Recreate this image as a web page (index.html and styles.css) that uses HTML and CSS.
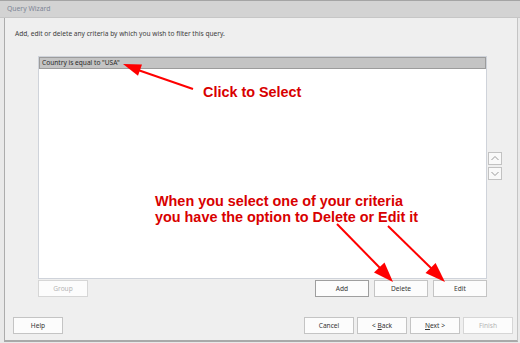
FILE: index.html
```html
<!DOCTYPE html>
<html>
<head>
<meta charset="utf-8">
<link rel="stylesheet" href="styles.css">
</head>
<body>
<div class="page">
  <div class="titlebar">Query Wizard</div>
  <div class="frame">
    <div class="desc">Add, edit or delete any criteria by which you wish to filter this query.</div>
    <div class="listrow">
      <div class="listbox">
        <div class="item selected">Country is equal to "USA"</div>
      </div>
      <div class="spin">
        <div class="spinbtn"><svg width="12" height="11" viewBox="0 0 12 11"><path d="M2.5 7 L6 3.5 L9.5 7" fill="none" stroke="#9a9a9a" stroke-width="1"/></svg></div>
        <div class="spinbtn"><svg width="12" height="11" viewBox="0 0 12 11"><path d="M2.5 4 L6 7.5 L9.5 4" fill="none" stroke="#9a9a9a" stroke-width="1"/></svg></div>
      </div>
    </div>
    <div class="row1">
      <div class="btn disabled w50">Group</div>
      <div class="right1">
        <div class="btn strong">Add</div>
        <div class="btn">Delete</div>
        <div class="btn">Edit</div>
      </div>
    </div>
    <div class="row2">
      <div class="btn w50">Help</div>
      <div class="right2">
        <div class="btn">Cancel</div>
        <div class="btn">&lt; <u>B</u>ack</div>
        <div class="btn"><u>N</u>ext &gt;</div>
        <div class="btn disabled">Finish</div>
      </div>
    </div>
  </div>

  <div class="note note1">Click to Select</div>
  <div class="note note2">When you select one of your criteria<br>you have the option to Delete or Edit it</div>
  <svg class="arrows" width="520" height="343" viewBox="0 0 520 343">
    <g stroke="#f00" stroke-width="2" fill="none">
      <line x1="193" y1="88" x2="138" y2="69"/>
      <line x1="337" y1="223" x2="381" y2="268"/>
      <line x1="388" y1="225" x2="432" y2="268"/>
    </g>
    <g fill="#f00">
      <polygon points="123,63 142,63.4 138,74.7"/>
      <polygon points="393,281 374,271.5 384.5,261.5"/>
      <polygon points="445,281 425.5,272 435.6,262"/>
    </g>
  </svg>
</div>
</body>
</html>
```

FILE: styles.css
```css
* { box-sizing: border-box; }
html, body { margin: 0; padding: 0; }
body {
  width: 520px;
  height: 343px;
  overflow: hidden;
  background: #e9e9e9;
  font-family: "Noto Sans", "Open Sans", sans-serif;
  font-size: 6.6px;
  color: #3a3a3a;
}
.page {
  position: relative;
  width: 520px;
  height: 343px;
  border-top: 1px solid #a4a4a4;
}
.titlebar {
  height: 17px;
  line-height: 16px;
  background: #d3d3d3;
  border-bottom: 1px solid #c6c6c6;
  padding-left: 7px;
  color: #7d8595;
  font-size: 6.8px;
}
.frame {
  margin-left: 4px;
  margin-right: 2px;
  height: 324px;
  background: #efefef;
  border-left: 1px solid #acacac;
  border-right: 1px solid #c4c4c4;
  border-bottom: 2px solid #a9a9a9;
  display: flex;
  flex-direction: column;
}
.desc {
  margin-top: 10px;
  padding-left: 10px;
  line-height: 12px;
  height: 12px;
  color: #3c3c3c;
}
.listrow {
  margin-top: 16px;
  margin-left: 33px;
  display: flex;
  align-items: center;
}
.listbox {
  width: 449px;
  height: 223px;
  background: #fff;
  border: 1px solid #cfd3da;
}
.item {
  height: 12px;
  line-height: 10px;
  padding-left: 2px;
  color: #2a2a2a;
}
.selected {
  background: #c4c4c4;
  border: 1px solid #9c9c9c;
}
.spin {
  margin-left: 1px;
  margin-top: -3px;
  display: flex;
  flex-direction: column;
  gap: 2px;
}
.spinbtn {
  width: 14px;
  height: 13px;
  background: #f9f9f9;
  border: 1px solid #c2c2c2;
  display: flex;
  align-items: center;
  justify-content: center;
}
.btn {
  width: 50px;
  height: 17px;
  background: #fcfcfc;
  border: 1px solid #c4c4c4;
  text-align: center;
  line-height: 15px;
  color: #353535;
}
.btn u { text-decoration: underline; }
.btn.disabled {
  color: #b4b4b4;
  border-color: #d6d6d6;
}
.btn.strong { border-color: #9e9e9e; }
.row1 {
  margin-top: 1px;
  margin-left: 33px;
  width: 449px;
  display: flex;
  justify-content: space-between;
}
.right1 {
  display: flex;
  gap: 5px;
}
.right1 .btn { width: 54px; }
.row2 {
  margin-top: 20px;
  margin-left: 8px;
  margin-right: 4px;
  display: flex;
  justify-content: space-between;
}
.right2 {
  display: flex;
  gap: 3px;
}
.note {
  position: absolute;
  font-family: "Liberation Sans", Arial, sans-serif;
  font-weight: bold;
  font-size: 14.4px;
  line-height: 16px;
  color: #d80000;
  white-space: nowrap;
}
.note1 { left: 203px; top: 83px; }
.note2 { left: 155px; top: 192px; }
.arrows {
  position: absolute;
  left: 0;
  top: 0;
  pointer-events: none;
}
```
